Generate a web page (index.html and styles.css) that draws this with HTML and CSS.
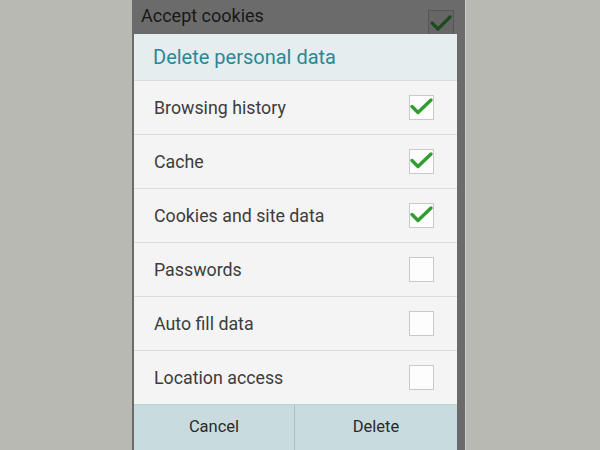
FILE: index.html
```html
<!DOCTYPE html>
<html>
<head>
<meta charset="utf-8">
<link rel="stylesheet" href="styles.css">
</head>
<body>
<div class="stage">
  <div class="phone">
    <div class="bg-row">
      <div class="bg-text">
        <div class="bg-title">Accept cookies</div>
        <div class="bg-sub">Allow sites to save and read cookie data</div>
      </div>
      <div class="bg-box">
        <svg width="24" height="24" viewBox="0 0 24 24"><path d="M3 12 L9 18 L21 6" fill="none" stroke="#1f4a1f" stroke-width="3.2" stroke-linecap="round" stroke-linejoin="round"/></svg>
      </div>
    </div>

    <div class="dialog">
      <div class="dlg-title">Delete personal data</div>
      <div class="row"><span>Browsing history</span><span class="box"><svg width="25" height="25" viewBox="0 0 25 25"><path d="M3 11.5 L9 17.5 L22 5" fill="none" stroke="#2f9e2f" stroke-width="3.4" stroke-linecap="round" stroke-linejoin="round"/></svg></span></div>
      <div class="row"><span>Cache</span><span class="box"><svg width="25" height="25" viewBox="0 0 25 25"><path d="M3 11.5 L9 17.5 L22 5" fill="none" stroke="#2f9e2f" stroke-width="3.4" stroke-linecap="round" stroke-linejoin="round"/></svg></span></div>
      <div class="row"><span>Cookies and site data</span><span class="box"><svg width="25" height="25" viewBox="0 0 25 25"><path d="M3 11.5 L9 17.5 L22 5" fill="none" stroke="#2f9e2f" stroke-width="3.4" stroke-linecap="round" stroke-linejoin="round"/></svg></span></div>
      <div class="row"><span>Passwords</span><span class="box"></span></div>
      <div class="row"><span>Auto fill data</span><span class="box"></span></div>
      <div class="row"><span>Location access</span><span class="box"></span></div>
      <div class="buttons">
        <div class="btn">Cancel</div>
        <div class="btn">Delete</div>
      </div>
    </div>
  </div>
</div>
</body>
</html>
```
FILE: styles.css
```css
html, body {
  margin: 0;
  padding: 0;
}
body {
  width: 600px;
  height: 450px;
  overflow: hidden;
  background: #b9b9b4;
  font-family: Roboto, "Noto Sans", sans-serif;
}
.stage {
  display: flex;
  padding-left: 132px;
  height: 450px;
}
.phone {
  position: relative;
  width: 333px;
  height: 450px;
  background: #6b6b6b;
  border-right: 1px solid #cfcfca;
  overflow: hidden;
}
.bg-row {
  display: flex;
  justify-content: space-between;
  padding: 5px 11px 0 9px;
  height: 29px;
  overflow: hidden;
}
.bg-text {
  height: 29px;
  overflow: hidden;
}
.bg-title {
  font-size: 18px;
  color: #181818;
  line-height: 22px;
}
.bg-sub {
  font-size: 14px;
  color: #2a2a2a;
  line-height: 18px;
  margin-top: 4px;
}
.bg-box {
  margin-top: 5px;
  width: 24px;
  height: 24px;
  border: 1px solid #555;
  background: #666;
}
.dialog {
  position: absolute;
  left: 2px;
  top: 34px;
  width: 323px;
  bottom: 0;
  background: #f4f4f4;
  display: flex;
  flex-direction: column;
}
.dlg-title {
  height: 46px;
  background: #e5edef;
  color: #2c8797;
  font-size: 20px;
  display: flex;
  align-items: center;
  padding-left: 19px;
}
.row {
  height: 53px;
  border-top: 1px solid #dcdcdc;
  display: flex;
  align-items: center;
  justify-content: space-between;
  padding: 0 23px 0 20px;
  font-size: 17.8px;
  color: #3c3c3c;
}
.row:last-of-type {
  height: 52px;
}
.box {
  width: 23px;
  height: 23px;
  border: 1px solid #c9c9c9;
  background: #fdfdfd;
  position: relative;
}
.box svg {
  position: absolute;
  left: -1px;
  top: -1px;
}
.buttons {
  display: flex;
  flex: 1;
  background: #c8dcdf;
  border-top: 1px solid #b9d3d4;
}
.btn {
  flex: 1;
  display: flex;
  justify-content: center;
  align-items: center;
  padding-bottom: 2px;
  font-size: 16.5px;
  color: #2a2a2a;
}
.btn:first-child {
  flex: 0 0 160px;
  border-right: 1px solid #a9bfc1;
}
```
